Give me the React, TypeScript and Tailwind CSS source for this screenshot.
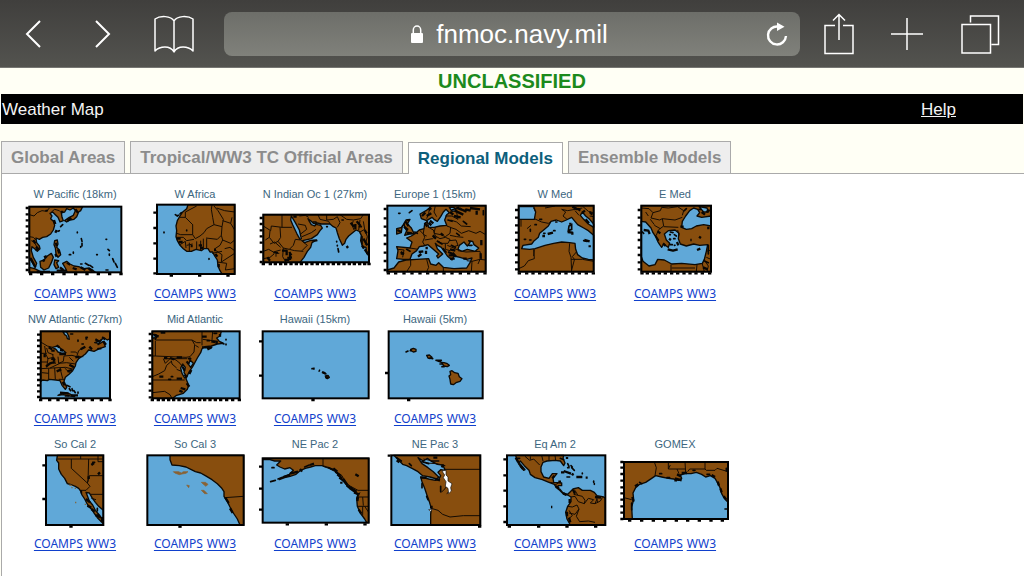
import React, { useState } from 'react';

interface Region {
  name: string;
  viewBox: string;
  // x, y, width, height of the map frame
  frame: [number, number, number, number];
  left: number[];
  bottom: number[];
  land: string;
  water?: string;
  borders?: string;
  specks?: string;
  islets?: string;
  snow?: string;
}

const ROWS: Region[][] = [
  [
    {
      name: 'W Pacific (18km)',
      viewBox: '15 63 360 240',
      frame: [58, 80, 276, 197],
      left: [84, 103, 121, 139, 158, 176, 195, 213, 232, 251, 270],
      bottom: [62, 95, 128, 162, 197, 231, 265, 299, 333],
      land: 'M58 80H218L212 92 206 96 200 110 192 118 180 120 170 126 164 122 178 112 190 106 196 92 190 84 180 90 170 86 164 96 154 98 156 112 160 122 150 126 144 112 136 104 128 96 120 100 126 108 122 116 130 124 134 136 130 150 122 162 110 170 98 172 88 178 78 174 80 188 88 198 90 206 82 214 74 206 66 200 64 212 70 232 80 250 76 262 62 240 58 230ZM90 244L102 240 112 228 124 220 130 232 124 248 116 264 102 270 92 262ZM134 182L142 180 144 192 140 202 148 210 152 224 144 232 138 222 136 204 132 194ZM158 250L170 244 180 252 192 258 206 260 222 266 238 264 250 272 256 277H172L166 264ZM58 262L74 266 96 277H58ZM134 240L146 242 140 248 146 262 138 266 132 254Z',
      borders: 'M58 104L72 108 82 98 96 92 110 94 118 84M58 170L70 172 78 180M124 96L134 88 148 92 154 98M64 182L74 188 82 204',
      specks: 'M78 200L84 206 76 210M70 180L76 190M132 120L136 132M156 92V100M196 88L204 98M184 114L172 122M138 188L140 198M144 208L148 220M136 222L140 230M98 240L104 244M62 234L76 262M150 262L160 270M188 264L200 268M212 262L226 270M236 266L248 274M80 276H120M140 272H170M102 232L110 228M136 158L140 150',
      islets: 'M152 140l6-6M144 154l4-2M190 216v4M202 156v2M214 176l2 8M216 190v8M212 200v2M178 224h4M260 224h2M288 178h2M294 208l4 4M298 222v4M308 236l4 10M316 250l6 12M172 250l6 4M226 250l10 6M240 256l8 6M212 252h4M288 270h6M108 92h4',
    },
    {
      name: 'W Africa',
      viewBox: '375 63 360 240',
      frame: [441, 74, 233, 208],
      left: [98, 144, 190, 236, 280],
      bottom: [484, 569, 654],
      land: 'M534 74L530 86 518 96 510 108 502 122 498 138 500 152 498 170 502 182 510 196 520 206 530 214 544 214 558 208 574 212 582 206 594 206 600 216 608 216 614 228 622 240 624 258 630 272 636 282H674V74Z',
      borders: 'M510 112H526V96L560 78M526 112L548 134V164H512L500 160M548 134L536 122M548 164L556 176 570 168 582 158 590 146 612 134 608 112 604 88 606 74M612 134L636 140 640 118 624 92 612 78M636 140L634 166 622 178 588 174M620 84L644 92 674 96M638 122L662 130 674 150M634 166L638 180 630 196 612 208M638 180L662 190 674 180M612 208L636 224 634 246 674 220M622 246L650 250 646 270 674 266M498 172L520 172 530 182 552 178M510 194L526 184 528 204M538 188V214M560 184V208M572 182V210M580 176V206M590 176V204M530 196L548 192M606 220L636 214M644 206L660 202 674 212M662 130L666 112',
      specks: 'M500 176H512M506 186H518M566 196H576M570 204H580M542 198H548M616 222L622 230M626 252V262M612 210H618',
      islets: 'M496 104l6 4M504 106h2M510 102l4-4M462 156v2M597 236v2M530 150v2',
    },
    {
      name: 'N Indian Oc 1 (27km)',
      viewBox: '15 63 360 240',
      frame: [40, 104, 317, 143],
      left: [114, 132, 151, 169, 188, 216, 246],
      bottom: [40, 61, 76, 92, 107, 123, 139, 154, 170, 186, 202, 218, 234, 250, 266, 282, 298, 313, 329, 344, 357],
      land: 'M40 104H357V247H40Z',
      water:
        'M150 247L162 232 172 214 182 202 186 188 200 180 180 182 164 188 158 182 184 176 202 164 210 152 217 144 212 136 202 134 198 128 214 132 240 132 250 140 258 144 262 158 268 176 277 196 284 190 288 178 296 168 306 160 318 150 328 154 334 166 332 182 338 200 348 202 350 220 357 228V247ZM124 108L136 128 148 150 154 176 150 178 140 160 128 134 122 120ZM174 116L184 124 190 130 200 132 194 138 184 134 178 124Z',
      borders: 'M40 138L62 152 64 138 96 142M96 104V142H126M60 152L58 172 46 180M90 142L92 172 84 184 100 204 118 208M58 172L72 190 84 184M60 192L74 186 92 202M118 208L130 196 136 178 152 180M118 208L134 212 160 214M152 180L172 196 156 212M40 214L56 208 70 216 92 210M100 204L98 230 108 247M40 236L60 232 72 222M144 132L166 136 170 148 152 162M156 170L184 158 198 148M176 112L166 106 148 108M204 104L210 118 236 124 240 132M230 104V120L250 118 262 110M262 110L270 128 262 142M270 104L290 118 310 120 332 116 340 104M310 122L306 134 312 150M330 120L326 150M340 124L344 148 330 156M344 148L352 170 346 194M88 220H78V230',
      specks: 'M96 212H110V226M112 234L126 232M118 216L124 226M120 222V240M104 240H118M302 128L312 140M316 132V148M320 124L332 138M290 198L294 204M344 150L350 160M340 176L352 196M344 208L354 222M130 110H140M52 232L60 242M336 196L342 206',
      islets: 'M260 184v2M262 196v2M264 206l2 10M336 170v22M188 182h12M72 218h10M230 140h2M190 126h8M276 120h4M328 140h6',
    },
    {
      name: 'Europe 1 (15km)',
      viewBox: '375 63 360 240',
      frame: [412, 77, 295, 198],
      left: [87, 115, 140, 166, 192, 218, 243, 270],
      bottom: [415, 437, 462, 486, 510, 533, 558, 582, 606, 631, 656, 681, 705],
      land: 'M546 77H707V275H412V270L432 264 446 246 468 240 500 238 536 236 542 252 558 256 566 248 580 262 612 266 650 264 660 248 666 234 650 238 630 232 612 228 606 240 592 228 584 216 574 202 562 196 556 190 562 206 578 222 574 226 564 234 560 228 566 222 548 206 534 194 520 198 508 200 500 212 486 222 480 238 460 238 440 236 444 212 440 200 480 204 486 186 470 174 484 168 496 160 508 150 522 146 524 132 532 124 536 142 552 142 570 138 590 136 584 120 590 104 598 98 588 88 580 96 572 110 562 124 552 118 546 112 530 122 514 116 510 102 528 92ZM468 120L480 118 472 132 484 144 492 160 478 162 464 166 470 152 464 142 462 130ZM440 146L456 142 454 158 440 162Z',
      water: 'M624 208L628 196 642 186 652 198 660 188 656 182 668 184 672 194 686 204 676 214 652 208 636 214ZM598 82L612 82 620 92 606 94Z',
      borders: 'M444 208L462 210 458 232M480 204L504 208M522 146L520 160 524 172 518 186 524 196M510 152L524 166 530 168M536 142L550 150 556 168 548 176 524 180M556 142L552 160 572 164 586 170 600 160 602 142 590 138M556 168L570 176 586 172 600 178 594 190 576 190 562 182M600 142L618 148 634 160 656 152 678 160 690 154 707 164M600 166L620 170 640 172M598 182L618 180 624 196 606 202 592 196M586 192V208L600 212M606 202L624 210M624 212L648 216 690 214M602 120L620 126 634 138 662 140M586 108L606 108 624 118 620 98M630 82L646 98M650 242L666 244 690 238 707 240M690 214L694 240M482 240V256L470 275M530 238L536 262 530 275M580 262V275M540 77L536 100 530 116M556 77L552 96 560 110M666 244L664 275M690 238L684 252',
      specks: 'M516 108L526 98M536 90L544 84M530 108L544 100M540 122L550 130M524 128L532 140M536 128L544 136M614 92L640 104M620 84L650 94M612 108L632 112M646 88L662 92M600 96L610 104M466 124L476 138M462 140L474 150M470 158L486 160M442 150L454 156M474 118V124M594 216L610 222M596 226H614M600 208L616 212M608 218L618 230M530 200V208M528 212V222M506 216L520 214M572 160L580 166M548 166L558 176M600 236H614M640 236H650M694 180V196M660 84L690 88M680 92V104M452 216L462 222M504 230L514 222M692 220V236',
      islets: 'M446 100h4M478 98l8-6M462 132l-6 8M494 156l8 4M606 90l20-8M594 120l12 4M640 124l10 8M562 184l14 8M580 206l8 10M454 222h6M470 208l10 6M604 196l12 6M620 160l8 6M700 92v12M656 196h10',
    },
    {
      name: 'W Med',
      viewBox: '0 63 360 240',
      frame: [71, 77, 225, 198],
      left: [90, 113, 136, 158, 180, 203, 225, 247, 268],
      bottom: [73, 95, 114, 134, 154, 173, 193, 213, 233, 253, 274, 295],
      land: 'M71 77H296V275H71Z',
      water:
        'M71 80H116L122 96 118 118H71ZM80 206L84 196 110 192 116 184 130 172 134 160 146 150 160 138 168 124 184 120 200 126 214 120 230 112 238 122 248 134 266 144 280 152 296 166V240L280 238 262 234 248 224 242 208 240 190 224 188 200 186 176 190 150 196 120 206 104 208ZM262 96L272 108 284 118 296 132V142L280 132 266 118 256 106Z',
      borders: 'M118 116L140 126 160 130 168 126M122 96L116 84M200 88L212 96 204 108 216 118M200 88L218 92 240 88 262 84M150 84L180 78M116 208L118 236 100 242 88 258 71 266M118 208L116 228M224 190L222 214 228 232 230 275M228 238L262 238 296 244M244 216L232 230 240 240M78 118V140M230 270L238 240M240 92L252 106M262 78L280 94 296 98M284 108L296 110M96 146L108 136',
      specks: 'M218 156L232 158V164M142 168H150M158 162L174 158M226 128V134M232 80L248 88M262 98L270 92M268 180L284 184M272 118L282 130M284 96L292 104M284 196V202M248 86L256 92',
      islets: 'M222 138l8-4v14l-10 4zM266 182l10 2M106 148v6M104 180h4M182 126h4M120 134h4M88 178h4M134 118h6M146 160h4M176 152h4',
    },
    {
      name: 'E Med',
      viewBox: '360 63 360 240',
      frame: [439, 77, 209, 198],
      left: [90, 113, 136, 158, 180, 203, 225, 247, 268],
      bottom: [441, 457, 475, 493, 511, 530, 548, 567, 585, 603, 622, 644],
      land: 'M439 77H648V275H439Z',
      water:
        'M439 124L452 126 468 144 474 158 482 170 488 184 494 194 500 202 506 192 514 198 520 202 524 190 514 180 508 162 520 152 540 150 552 160 550 176 556 192 574 198 596 192 614 196 638 194 634 214 628 238 622 250 600 254 560 250 530 252 508 240 488 238 480 254 462 258 444 244 439 230ZM560 142L562 124 572 108 584 92 596 84 608 88 614 98 606 108 620 112 648 108V138L626 134 604 138 590 146 574 148ZM612 80L636 84 640 96 626 96Z',
      borders: 'M439 84L462 86 474 98 496 92 500 82 520 84 548 80 566 92 562 106M474 98L468 114 494 120 502 116 540 120 562 112M502 116L506 138 490 150 484 166M506 140L550 142M478 136L496 146M528 254V275M530 264H600M606 254L604 275M628 240L640 258 636 275M634 214L648 210M634 232L648 238M548 150L552 166M466 118L478 134M452 96L460 108M622 252L628 275',
      specks: 'M488 154L496 160M522 176L528 180M546 186L550 196M518 208L534 212 548 208M606 210L616 206M556 140H566M612 170L618 174M586 180H590M634 96L644 90M446 150L460 152 464 162M620 96L630 104M640 140V148M624 262L638 268M504 190L512 198',
      islets: 'M526 194h6M538 164l6 4M536 176h4M524 164h2M568 92l6-6M482 168l8 12M612 88h6M640 196v26M526 156l8 2M446 160l-4-4M630 244l10 4M538 196h2',
    },
  ],
  [
    {
      name: 'NW Atlantic (27km)',
      viewBox: '15 54 360 240',
      frame: [92, 70, 208, 201],
      left: [80, 97, 114, 131, 148, 165, 181, 199, 216, 232, 250, 267],
      bottom: [92, 119, 144, 170, 196, 221, 247, 274, 300],
      land: 'M92 70H300V92L292 96 282 90 270 98 264 110 280 100 286 116 268 122 252 130 236 126 226 138 218 144 206 152 198 164 196 174 188 188 178 198 166 208 162 220 170 238 166 244 156 232 150 218 138 216 118 214 112 218 98 216 92 220ZM144 262L160 254 180 258 194 266 180 264 160 260Z',
      water: 'M158 70L164 80 170 84 172 92 178 94 176 84 170 72ZM128 118L142 114 156 124 168 134 156 136 144 132 138 124ZM254 104L274 96 266 106Z',
      borders: 'M92 102L112 114 128 118M104 114L108 140 114 152 110 178M92 136H110M92 162H112M92 182L128 180 166 178 192 184M112 152L132 148 136 168M128 138L132 168M144 146L146 166 160 160 162 144M162 144L186 142 200 146M146 166L170 164 196 168M120 180L150 166M116 182V214M134 180L136 214M150 180L158 212M146 214H162M164 180L180 196M96 194L116 196M200 146L206 128 220 118M206 146H220M182 132L196 132 202 136M178 148L190 160M110 120L114 134 130 140',
      specks: 'M116 118L126 124M124 128H134M140 112L148 118M148 138H168M150 126L160 128M212 124L226 116M238 116L246 124M256 94L266 100M276 88L286 94M196 148L208 146M178 170L192 178M108 176L120 166 134 162M172 190L186 186M140 190L154 184M124 152L136 156M184 262L204 262M150 254L176 256M280 100L288 110M104 138V148M226 92H232M158 222L164 232',
      islets: 'M170 232l10 4M178 242l4 6M186 242l2 6M192 248l4 6M204 252v4M264 122h8M204 96v4M216 108h4M228 88h4M182 78h6M166 264h10',
    },
    {
      name: 'Mid Atlantic',
      viewBox: '375 54 360 240',
      frame: [427, 70, 262, 201],
      left: [78, 99, 121, 142, 163, 184, 206, 227, 248, 268],
      bottom: [427, 445, 460, 476, 491, 507, 522, 538, 553, 569, 584, 600, 616, 632, 650, 668, 688],
      land: 'M427 70H634L630 84 620 90 628 100 640 106 622 108 604 114 584 116 576 122 572 134 562 150 548 176 536 194 528 212 536 232 532 244 520 256 500 262 488 271H427Z',
      water: 'M518 168L526 178 522 194 530 206 524 210 516 196 512 180ZM540 156L550 166 542 178 536 170ZM427 80H438L434 90H427Z',
      borders: 'M438 96H546L554 110 552 132 540 146 528 148 436 144V98M427 144H436M546 96L560 104 572 104M576 70V112M578 94L608 98 622 100M608 70L606 96M460 152L466 166 482 150 498 156 510 166 520 180M427 206L446 198 464 188 470 172 484 160M427 216H524M427 254L464 250 480 260 486 271M466 152H532M556 112L566 118M540 156V148M484 158L486 168 500 180M500 184L514 190',
      specks: 'M576 118H604L592 124M518 176L524 188M524 200L530 208M462 150H472M480 150L492 154M530 160L536 168M512 240L526 244M448 206H460M500 212H516M530 226L538 236M620 98V108M630 78V86M432 80L446 86M576 86H590M604 100L616 102M508 248L518 252M500 148H516M544 186L538 198M452 74H466',
      islets: 'M648 94v2M648 108v2M634 104l8 4M484 206h4M592 98h6M476 214h6M536 152h6M612 76h8M440 86l-4 8',
    },
    {
      name: 'Hawaii (15km)',
      viewBox: '15 54 360 240',
      frame: [38, 70, 318, 201],
      left: [100, 203],
      bottom: [189],
      land: 'M226 204L234 202 238 208 232 212 228 210Z',
      specks: 'M190 182H194M206 187L210 189M216 192L226 196M228 206L234 210',
      islets: 'M186 182h4M220 194l8 4',
    },
    {
      name: 'Hawaii (5km)',
      viewBox: '375 54 360 240',
      frame: [416, 70, 282, 201],
      left: [195],
      bottom: [476],
      land: 'M600 190L606 188 614 194 624 196 628 206 636 212 630 220 618 224 610 230 602 228 600 214 597 204 602 200ZM482 124L490 121 498 124 498 130 490 132 484 129ZM530 142L538 141 546 148 540 152 534 150ZM574 163L582 164 590 166 598 172 592 176 582 174Z',
      islets: 'M468 132l6-3M484 126l-3 2M558 157h16M562 158l10 4M570 168h6M576 176h6M540 150l8 2',
    },
  ],
  [
    {
      name: 'So Cal 2',
      viewBox: '15 54 360 240',
      frame: [108, 67, 172, 209],
      left: [97, 198],
      bottom: [183],
      land: 'M142 67L140 82 146 90 146 108 154 124 164 136 172 152 186 156 196 160 206 166 212 174 216 186 224 198 230 210 236 220 244 228 252 240 262 254 280 272V67Z',
      water: 'M228 178L238 180 246 194 256 208 266 220 280 232V262L268 246 256 232 248 216 238 204Z',
      borders: 'M142 78H280M212 67V78M264 67V86H280M184 78V106L232 150 234 144 236 78M238 128H280M232 150L240 160 228 172 212 172M240 184H280M232 150L238 128M244 196L258 200',
      specks: 'M244 96L252 90M264 124L270 118M236 130V138M232 218L244 224M228 198L240 208M256 246L268 252M244 228L254 236M276 252V266',
      islets: 'M262 226v8M248 88h6M214 174v6M264 244l6 10',
    },
    {
      name: 'So Cal 3',
      viewBox: '375 54 360 240',
      frame: [412, 67, 289, 209],
      left: [],
      bottom: [510],
      land: 'M480 67V80L486 96 508 98 528 102 544 110 556 116 572 120 586 128 606 140 622 152 634 164 642 176 642 190 652 206 660 222 670 240 682 258 690 276H701V67Z',
      borders: 'M644 194L701 190',
      specks: 'M646 194L656 210M660 226L668 240',
    },
    {
      name: 'NE Pac 2',
      viewBox: '15 54 360 240',
      frame: [38, 76, 318, 193],
      left: [101, 167, 230],
      bottom: [112, 229, 345],
      land: 'M38 76H356V269H350L344 258 332 242 322 220 320 196 324 184 312 176 298 166 286 152 270 130 256 114 236 104 216 98 196 98 182 102 166 106 152 112 138 124 120 130 104 134 88 140 94 134 118 124 130 112 120 104 104 108 90 102 80 96 92 84 74 84 60 80 38 80Z',
      borders: 'M219 76V100L236 106 256 116 276 128 286 148 302 160 324 172M324 172H356M324 192H356M322 220H356M338 220V248M338 192L340 218M344 220L356 238M330 178L324 192',
      specks: 'M250 106L262 116M256 116L272 128M262 124L276 136M268 134L284 146M280 138L292 156M290 158L306 166M304 166L320 176M312 178L326 184M120 122L144 116M100 132L120 126M150 108L156 116M274 146V152M180 96L192 92M324 192L322 204M326 230L334 242M316 124L326 130',
      islets: 'M62 146l14-4M84 138l10-4M66 104h6M164 102l14-6M236 104l16 6',
    },
    {
      name: 'NE Pac 3',
      viewBox: '375 54 360 240',
      frame: [424, 67, 267, 209],
      left: [68],
      bottom: [689],
      land: 'M432 67H691V276H542V244L544 226 538 206 530 184 524 166 516 146 512 132 536 138 556 142 566 140 572 128 564 118 572 110 586 112 578 96 562 94 546 86 532 76 520 84 504 74 516 92 534 104 550 116 566 132 560 138 540 132 518 128 504 116 486 106 470 98 458 94 446 82Z',
      borders: 'M584 109H691M544 226L564 232 578 244 600 252 640 248 691 248M520 78L540 82 556 90M528 90L560 92 586 98M574 178L584 168 590 160M590 182L600 174',
      specks: 'M512 134H530M556 138L570 142M540 222H548M440 82L448 88M550 74H562M574 102L582 96',
      islets: 'M440 74l14 10M478 92l6 6M516 86l20 6M546 84h20M572 160v16M516 152v12M534 200l-4-10',
      snow: 'M576 114L588 112 588 126 594 132 594 144 606 152 602 164 604 174 596 182 594 166 586 160 588 146 580 134 584 126ZM536 230L546 228 542 236Z',
    },
    {
      name: 'Eq Am 2',
      viewBox: '0 54 360 240',
      frame: [36, 67, 295, 209],
      left: [79, 127, 173, 220, 267],
      bottom: [43, 131, 216, 302],
      land: 'M62 67L66 82 78 96 90 110 86 112 70 92 76 84 88 98 102 112 106 124 120 134 142 140 162 148 178 154 184 164 194 168 204 180 218 184 226 176 234 168 250 164 262 172 286 172 298 178 306 188 326 192 331 196V276H226L216 258 212 238 218 220 228 206 228 192 218 186 206 184 194 172 186 166 190 158 200 158 200 150 176 148 174 136 186 122 172 122 162 136 146 132 138 116 138 102 144 88 156 84 180 82 196 84 206 98 210 90 204 76 206 67Z',
      borders: 'M90 70L104 82 116 78 134 96M106 70V80M140 67L144 84M162 67V84M180 67L182 82M164 148L176 150M180 156L190 150M228 192L240 190 250 206 268 212 270 202 262 190 236 184M268 212L280 196 296 200 286 210 300 212 316 204 322 194M218 220L232 222 246 216 252 228 240 244 222 240M252 228L244 250 254 266 280 264M240 172L248 186M304 188L308 210M222 232L232 248 220 258M280 264L300 268M300 212L306 198',
      specks: 'M62 74L70 88M76 98L84 108M198 118H208M206 114L228 122M230 122L236 126M244 132H262M272 134H278M172 136L178 128M182 160L192 166M204 180L214 186M168 222H172M224 198V210M216 236V250M222 254L226 268M216 72V78M190 146H198M300 192L318 194M234 170L240 182',
      islets: 'M218 92l4 8M230 104l8 8M228 98l4 4M216 132h8M296 144v4M298 152v2M262 120v2M66 76h8M196 76l10 4M218 104h4',
    },
    {
      name: 'GOMEX',
      viewBox: '360 54 360 240',
      frame: [387, 87, 312, 171],
      left: [87, 104, 123, 143, 163, 181, 200, 220, 239, 258],
      bottom: [404, 440, 475, 509, 544, 578, 613, 648, 682],
      land: 'M387 87H699V208L688 196 680 182 676 166 668 150 660 136 646 128 632 132 620 124 604 118 588 122 570 122 556 126 560 136 550 142 536 138 520 136 500 132 482 128 470 136 452 148 434 154 422 164 414 180 416 200 410 222 412 258H387Z',
      borders: 'M478 87L484 104 480 128M520 87V108H546L552 122M570 87L572 120M584 108H630L634 112 660 112 666 106 699 116M630 87V108M387 194L410 200M520 108L526 96M578 116L584 108M546 108H572',
      specks: 'M546 124L558 130M540 136L560 142M560 120H576M420 160L430 154M412 192L416 206M676 166L680 178M650 126L660 132M538 142H546M668 146L672 158M686 190L694 200',
      islets: 'M694 106v8M690 228h8M494 122h6M516 134h8M434 148l6 4M594 112h6M410 210v20M636 124h8',
    },
  ],
];

// Drawn in plain land colour, without a coastline
const CHANNEL_ISLANDS = 'M490 116H506L514 120 520 116H534L528 121 516 123 508 125 494 120ZM530 156L538 158 536 164ZM574 148L586 148 594 154 588 160 580 154ZM574 172L582 172 592 182 584 182Z';

const TABS = ['Global Areas', 'Tropical/WW3 TC Official Areas', 'Regional Models', 'Ensemble Models'];

const RegionMap: React.FC<{ region: Region }> = ({ region }) => {
  const [x, y, w, h] = region.frame;
  const ticks =
    region.left.map((ty) => `M${x - 11} ${ty}h9`).join('') +
    region.bottom.map((tx) => `M${tx - 5} ${y + h + 5}h10`).join('');

  return (
    <svg viewBox={region.viewBox} className="block h-20 w-[120px]" role="img" aria-label={region.name}>
      <rect x={x} y={y} width={w} height={h} fill="#60a8d8" />
      <path d={region.land} fill="#884e0e" stroke="#0c0a06" strokeWidth="4" strokeLinejoin="round" />
      {region.water && <path d={region.water} fill="#60a8d8" stroke="#0c0a06" strokeWidth="4" strokeLinejoin="round" />}
      <path d={region.borders} fill="none" stroke="#140b03" strokeWidth="3" strokeLinejoin="round" />
      <path d={region.specks} fill="none" stroke="#080604" strokeWidth="7" strokeLinejoin="round" />
      <path d={region.islets} fill="none" stroke="#080604" strokeWidth="5" strokeLinecap="round" />
      {region.snow && <path d={region.snow} fill="#fff" stroke="#111" strokeWidth="2" />}
      {region.name === 'So Cal 3' && <path d={CHANNEL_ISLANDS} fill="#8a6234" stroke="#8a6234" strokeWidth="2" />}
      {region.name === 'So Cal 2' && (
        <path d="M178 156l8 2M184 164h4M194 166h4M197 206v5M224 214h4" fill="none" stroke="#7d6a48" strokeWidth="4" />
      )}
      <rect x={x} y={y} width={w} height={h} fill="none" stroke="#000" strokeWidth="6" />
      <path d={ticks} fill="none" stroke="#000" strokeWidth="7" />
    </svg>
  );
};

const RegionCell: React.FC<{ region: Region }> = ({ region }) => (
  <div className="flex h-[125px] w-[120px] flex-col items-center">
    <h2 className="h-4 text-[11px] leading-[18px] whitespace-nowrap text-[#3c6680]">{region.name}</h2>
    <RegionMap region={region} />
    <div className="flex gap-1 pt-[5px] font-['Noto_Sans',sans-serif] text-xs leading-4 text-[#1040cc] underline underline-offset-2">
      <a href="#coamps">COAMPS</a>
      <a href="#ww3">WW3</a>
    </div>
  </div>
);

const BrowserBar: React.FC = () => {
  const [url, setUrl] = useState('fnmoc.navy.mil');

  return (
    <header className="flex h-[68px] items-center border-b border-[#777773] bg-linear-to-b from-[#403f3d] to-[#53534f] text-white">
      <button aria-label="Back" className="flex w-[68px] justify-center">
        <svg width="18" height="30" viewBox="0 0 18 30" fill="none" stroke="currentColor" strokeWidth="2">
          <path d="M15 2L2 15l13 13" />
        </svg>
      </button>
      <button aria-label="Forward" className="flex w-[68px] justify-center">
        <svg width="18" height="30" viewBox="0 0 18 30" fill="none" stroke="currentColor" strokeWidth="2">
          <path d="M3 2l13 13L3 28" />
        </svg>
      </button>
      <button aria-label="Bookmarks" className="mr-3 flex w-[76px] justify-center">
        <svg width="40" height="38" viewBox="0 0 40 38" fill="none" stroke="currentColor" strokeWidth="1.5">
          <path d="M20 6C17 .5 6 .5 1 4v32c5-5 15-6 19 1 4-7 14-6 19-1V4C34 .5 23 .5 20 6zM20 6v31" strokeLinejoin="round" />
        </svg>
      </button>

      <div className="flex h-11 min-w-0 flex-1 items-center rounded-lg bg-linear-to-b from-[#6d6e69] to-[#80817b]">
        <div className="ml-10 flex min-w-0 flex-1 items-center justify-center gap-3">
          <svg width="14" height="18" viewBox="0 0 14 18" className="shrink-0">
            <path d="M3.3 9V5a3.7 4 0 0 1 7.4 0v4" fill="none" stroke="currentColor" strokeWidth="1.5" />
            <rect x="1" y="8" width="12" height="10" rx="1" fill="currentColor" />
          </svg>
          <input
            aria-label="Address"
            value={url}
            onChange={(e) => setUrl(e.target.value)}
            className="field-sizing-content bg-transparent text-[26px] leading-8 outline-none"
          />
        </div>
        <button aria-label="Reload" className="flex w-[46px] justify-center">
          <svg width="22" height="24" viewBox="0 0 22 24" fill="none" stroke="currentColor" strokeWidth="2.4">
            <path d="M12 4.500A9 9 0 1 0 20 14" />
            <path d="M11 .5L18.500 4.800 11 9z" fill="currentColor" stroke="none" />
          </svg>
        </button>
      </div>

      <button aria-label="Share" className="flex w-[78px] justify-center">
        <svg width="32" height="42" viewBox="0 0 32 42" fill="none" stroke="currentColor" strokeWidth="1.5">
          <path d="M12 12.500H2v28h28v-28H20M16 27V2M10 7.500L16 1.500l6 6" />
        </svg>
      </button>
      <button aria-label="New tab" className="flex w-[58px] justify-center">
        <svg width="34" height="34" viewBox="0 0 34 34" fill="none" stroke="currentColor" strokeWidth="1.5">
          <path d="M17 1v32M1 17h32" />
        </svg>
      </button>
      <button aria-label="Show tabs" className="flex w-[88px] justify-center">
        <svg width="40" height="40" viewBox="0 0 40 40" fill="none" stroke="currentColor" strokeWidth="1.5">
          <path d="M2 10.500h28.500V39H2zM10.500 8.500V2h28v28.500h-7" />
        </svg>
      </button>
    </header>
  );
};

export default function App() {
  const [active, setActive] = useState('Regional Models');

  return (
    <div className="flex min-h-screen flex-col bg-[#fffff5] font-['Liberation_Sans',Arial,sans-serif]">
      <BrowserBar />

      <div className="text-center text-xl leading-[26px] font-bold text-[#1c8a1c]">UNCLASSIFIED</div>

      <div className="mx-px flex h-[30px] items-center justify-between bg-black pt-0.5 pr-[67px] pl-px text-[17px] text-[#f4f4f4]">
        <h1>Weather Map</h1>
        <a href="#help" className="underline">
          Help
        </a>
      </div>

      <nav role="tablist" className="mt-[17px] ml-px flex items-end gap-[5px]">
        {TABS.map((tab) => (
          <button
            key={tab}
            role="tab"
            aria-selected={tab === active}
            onClick={() => setActive(tab)}
            className={
              tab === active
                ? 'relative z-10 -mb-px h-8 border border-b-0 border-[#aaa] bg-white px-[9px] text-[17px] font-bold text-[#0d5f7c]'
                : 'h-8 border border-b-0 border-[#aaa] bg-[#eee] px-[9px] text-[17px] font-bold text-[#8c8c8c]'
            }
          >
            {tab}
          </button>
        ))}
      </nav>

      <main className="ml-px flex-1 border-t border-l border-[#aaa] bg-white pt-[11px] pl-[13px]">
        {ROWS.map((row) => (
          <div key={row[0].name} className="flex">
            {row.map((region) => (
              <RegionCell key={region.name} region={region} />
            ))}
          </div>
        ))}
      </main>
    </div>
  );
}
